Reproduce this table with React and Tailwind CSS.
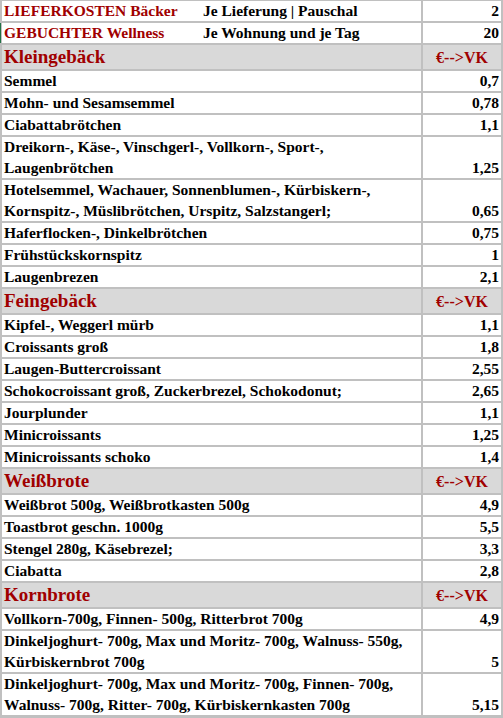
import React from "react";

const RED = "text-[#a00000]";

const sections = [
  {
    title: "Kleingebäck",
    items: [
      ["Semmel", "0,7"],
      ["Mohn- und Sesamsemmel", "0,78"],
      ["Ciabattabrötchen", "1,1"],
      [["Dreikorn-, Käse-, Vinschgerl-, Vollkorn-, Sport-,", "Laugenbrötchen"], "1,25"],
      [["Hotelsemmel, Wachauer, Sonnenblumen-, Kürbiskern-,", "Kornspitz-, Müslibrötchen, Urspitz, Salzstangerl;"], "0,65"],
      ["Haferflocken-, Dinkelbrötchen", "0,75"],
      ["Frühstückskornspitz", "1"],
      ["Laugenbrezen", "2,1"],
    ],
  },
  {
    title: "Feingebäck",
    items: [
      ["Kipfel-, Weggerl mürb", "1,1"],
      ["Croissants groß", "1,8"],
      ["Laugen-Buttercroissant", "2,55"],
      ["Schokocroissant groß, Zuckerbrezel, Schokodonut;", "2,65"],
      ["Jourplunder", "1,1"],
      ["Minicroissants", "1,25"],
      ["Minicroissants schoko", "1,4"],
    ],
  },
  {
    title: "Weißbrote",
    items: [
      ["Weißbrot 500g, Weißbrotkasten 500g", "4,9"],
      ["Toastbrot geschn. 1000g", "5,5"],
      ["Stengel 280g, Käsebrezel;", "3,3"],
      ["Ciabatta", "2,8"],
    ],
  },
  {
    title: "Kornbrote",
    items: [
      ["Vollkorn-700g, Finnen- 500g, Ritterbrot 700g", "4,9"],
      [["Dinkeljoghurt- 700g, Max und Moritz- 700g, Walnuss- 550g,", "Kürbiskernbrot 700g"], "5"],
      [["Dinkeljoghurt- 700g, Max und Moritz- 700g, Finnen- 700g,", "Walnuss- 700g, Ritter- 700g, Kürbiskernkasten 700g"], "5,15"],
    ],
  },
];

function Row({ label, value }) {
  const two = Array.isArray(label);
  return (
    <div className={`flex gap-[2px] ${two ? "h-[41px]" : "h-[20px]"}`}>
      <div className="w-[419px] bg-white pl-[2px] flex flex-col justify-end text-[15.5px] leading-[20.5px] text-black whitespace-nowrap">
        {two ? (
          <>
            <div>{label[0]}</div>
            <div>{label[1]}</div>
          </>
        ) : (
          <div>{label}</div>
        )}
      </div>
      <div className="flex-1 bg-white pr-[2px] flex items-end justify-end text-[15.5px] leading-[20.5px] text-black">
        {value}
      </div>
    </div>
  );
}

function Header({ title }) {
  return (
    <div className="flex gap-[2px] h-[24px]">
      <div className={`w-[419px] bg-[#d9d9d9] pl-[2px] flex items-end text-[19px] leading-[24px] ${RED}`}>
        {title}
      </div>
      <div className={`flex-1 bg-[#d9d9d9] flex items-end justify-center text-[16px] leading-[22px] ${RED}`}>
        €--&gt;VK
      </div>
    </div>
  );
}

export default function App() {
  return (
    <div
      className="w-[503px] h-[718px] overflow-hidden bg-[#c0c0c0] pt-[1px] px-[2px] flex flex-col gap-[2px] font-bold"
      style={{ fontFamily: '"Liberation Serif", "Times New Roman", serif' }}
    >
      <div className="flex gap-[2px] h-[20px]">
        <div className="w-[419px] bg-white pl-[2px] flex items-end text-[15.5px] leading-[20.5px] whitespace-nowrap">
          <span className={`w-[199px] shrink-0 ${RED}`}>LIEFERKOSTEN Bäcker</span>
          <span className="text-black">Je Lieferung | Pauschal</span>
        </div>
        <div className="flex-1 bg-white pr-[2px] flex items-end justify-end text-[15.5px] leading-[20.5px] text-black">
          2
        </div>
      </div>
      <div className="flex gap-[2px] h-[20px]">
        <div className="relative w-[419px] bg-white pl-[2px] flex items-end text-[15.5px] leading-[20.5px] whitespace-nowrap">
          <div className="absolute left-[-2px] top-0 bottom-0 w-[1px] bg-[#217346]" />
          <span className={`w-[199px] shrink-0 ${RED}`}>GEBUCHTER Wellness</span>
          <span className="text-black">Je Wohnung und je Tag</span>
        </div>
        <div className="flex-1 bg-white pr-[2px] flex items-end justify-end text-[15.5px] leading-[20.5px] text-black">
          20
        </div>
      </div>
      {sections.map((s) => (
        <React.Fragment key={s.title}>
          <Header title={s.title} />
          {s.items.map(([l, v], i) => (
            <Row key={i} label={l} value={v} />
          ))}
        </React.Fragment>
      ))}
    </div>
  );
}
